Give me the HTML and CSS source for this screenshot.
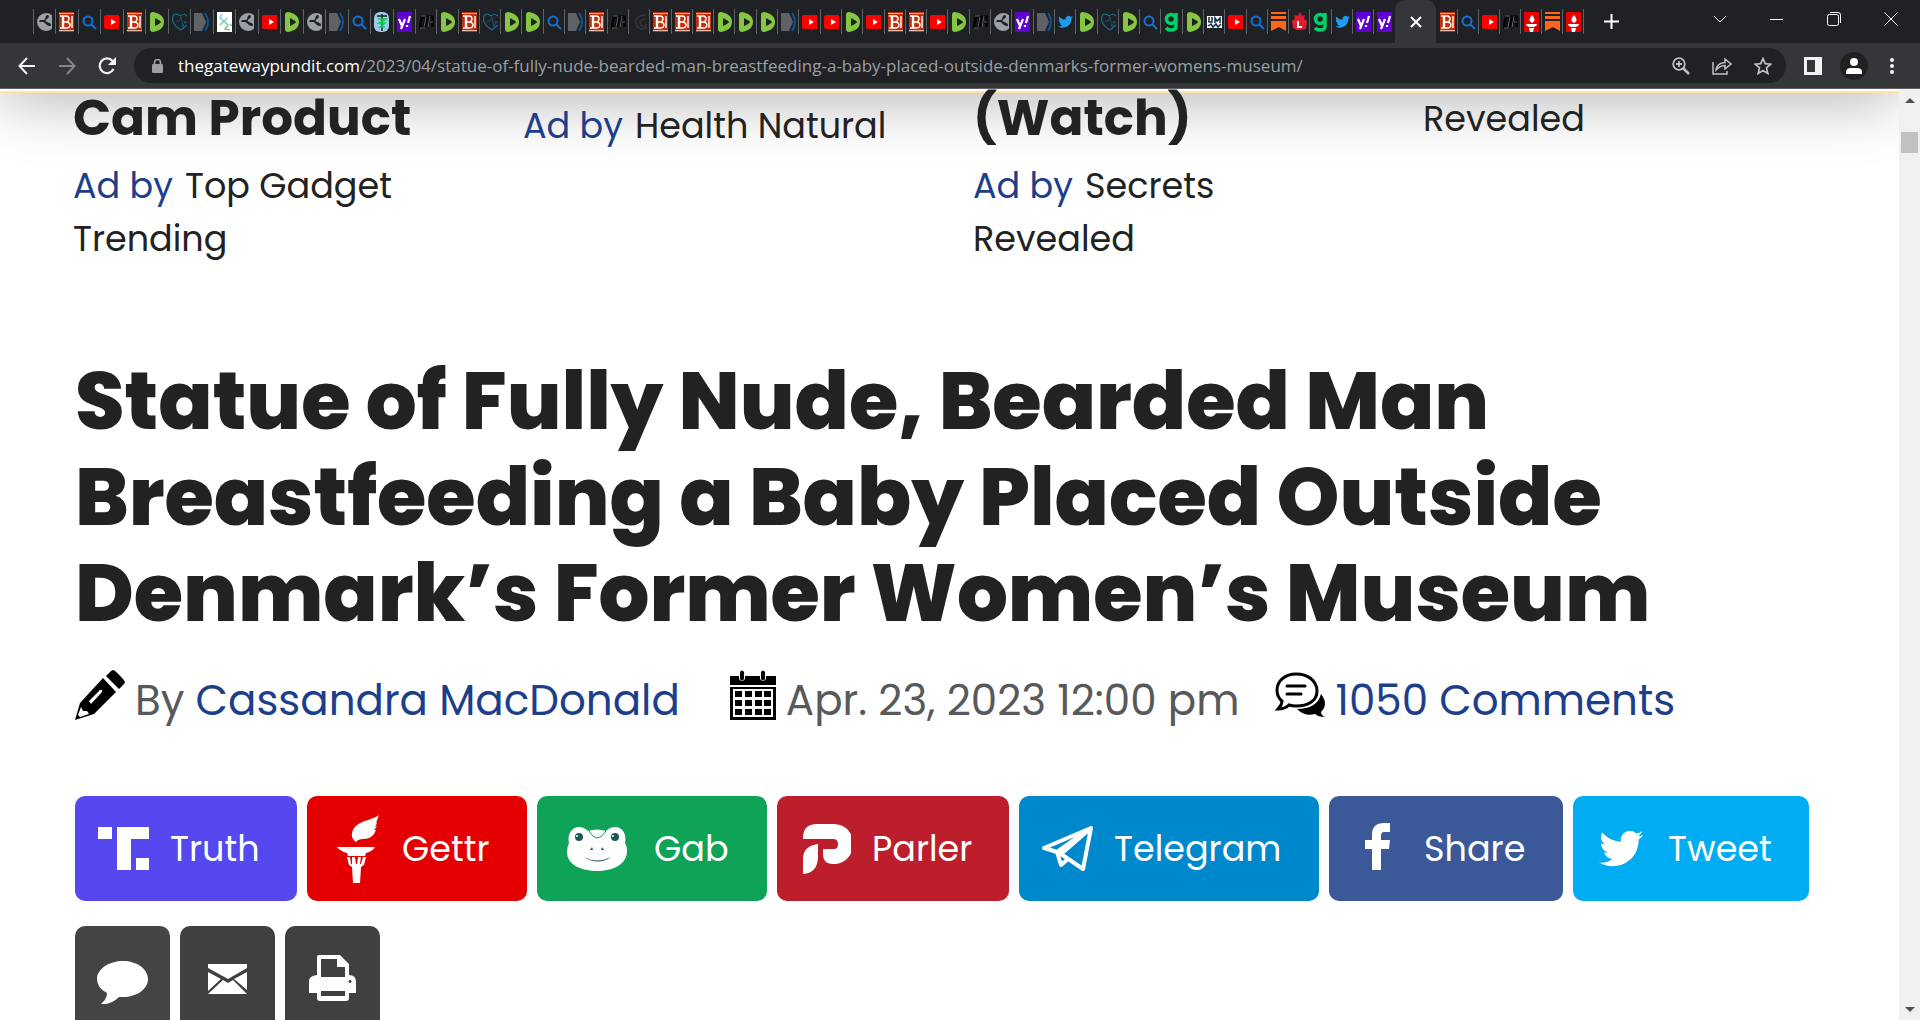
FILE: index.html
```html
<!DOCTYPE html>
<html lang="en">
<head>
<meta charset="utf-8">
<meta name="viewport" content="width=device-width, initial-scale=1">
<title>Statue of Fully Nude, Bearded Man Breastfeeding a Baby Placed Outside Denmark’s Former Women’s Museum</title>
<link rel="stylesheet" href="styles.css">
</head>
<body>
<svg class="sprite" aria-hidden="true">
  <symbol id="globe" viewBox="0 0 15 20"><circle cx="9" cy="10" r="9" fill="#9aa0a6"/><path d="M10 3c3 0 2 3 0 4s-2 2 0 3 4 1 4 3-2 1-4 0-2-3-4-3H2l1-2h4c2-1 1-4 3-5z" fill="#202124"/></symbol>
  <symbol id="bb" viewBox="0 0 15 20"><path fill="#c42e07" d="M0 0h15v20H0z"/><path d="M0 1.500h15M0 18.500h15" stroke="#e9b5a5"/><path d="M1 4h6q3 0 3 3t-4 3q5 0 5 3t-4 3H1M4 10h2M13 4v12" fill="none" stroke="#fff" stroke-width="1.400"/><path d="M4 4v12" stroke="#fff" stroke-width="2.400"/></symbol>
  <symbol id="search" viewBox="0 0 15 20"><g fill="none" stroke="#1270cf" stroke-width="2"><circle cx="6" cy="9" r="4.500"/><path d="m9 12 5 5"/></g></symbol>
  <symbol id="yt" viewBox="0 0 15 20"><rect y="3" width="18" height="14" rx="2" fill="#f00"/><path d="m7 7 5 3-5 3z" fill="#fff"/></symbol>
  <symbol id="rumble" viewBox="0 0 15 20"><path d="M1 3Q1 0 4 0c6 1 11 4 11 10S10 19 4 20q-3 0-3-3z" fill="#85c742"/><path d="M6 6q6 3 6 4t-6 4z" fill="#202124"/></symbol>
  <symbol id="heart" viewBox="0 0 15 20"><path d="M15 4Q12 1 8 4 3 0 1 4c-2 6 3 11 8 14l6-5" fill="none" stroke="#15728a" stroke-width="1.200"/><path d="M4 9h3l2-4 2 10 2-6 1 2h2" fill="none" stroke="#125468"/></symbol>
  <symbol id="tag" viewBox="0 0 15 20"><path d="M0 1h8l4 9-4 9H0z" fill="#5f6368"/><path d="M11 1q6 9 0 18" fill="none" stroke="#0b55a0" stroke-width="2"/></symbol>
  <symbol id="graph" viewBox="0 0 15 20"><path fill="#fff" d="M0 0h15v20H0z"/><path d="m5 2-2 4 4 3 4-3" fill="none" stroke="#7fd0dd" stroke-width="1.500"/><path d="m3 13 4-4 4 4-3 4 5 1m0-6 2 2" fill="none" stroke="#7cc79a" stroke-width="1.500"/></symbol>
  <symbol id="medic" viewBox="0 0 15 20"><rect width="15" height="20" rx="6" fill="#9ccbe8"/><path d="M8 2v17M3 4h10" stroke="#222" stroke-width="1.500"/><path d="M4 7h8L5 11h6l-5 4h5" fill="none" stroke="#08d04b" stroke-width="1.500"/></symbol>
  <symbol id="yahoo" viewBox="0 0 15 20"><path fill="#6001d2" d="M0 0h15v20H0z"/><path d="m2 7 3 7m3-7-4 10M13 4l-2 7m-1 2v2" stroke="#fff" stroke-width="2.200" fill="none"/></symbol>
  <symbol id="or" viewBox="0 0 15 20"><path d="M3 5h4L5 15H1zm5 10 2-10h5l-1 5h-4m3 0 1 5" fill="none" stroke="#050505" stroke-width="3"/><path d="M2 4h5M1 16h5M7 5 5 15M11 4 9 15m2-5h3" stroke="#666" fill="none"/></symbol>
  <symbol id="spiral" viewBox="0 0 15 20"><path d="M14 3C5 3 3 8 4 12s6 7 11 3M14 7c-5 0-7 3-5 6s5 1 5-1" fill="none" stroke="#34363a" stroke-width="1.500"/></symbol>
  <symbol id="bird" viewBox="0 0 24 20"><path d="M24 2.400c-.9.400-1.800.7-2.800.8 1-.6 1.800-1.600 2.200-2.700-1 .6-2 1-3.100 1.200A4.900 4.900 0 0 0 12 6.100C7.900 5.900 4.300 4 1.900 1 .6 3.100 1.200 6.100 3.400 7.500c-.8 0-1.600-.2-2.200-.6 0 2.300 1.600 4.400 3.900 4.900-.7.200-1.500.2-2.200.1.600 1.900 2.400 3.300 4.600 3.400A9.900 9.900 0 0 1 .2 17.300C9 22.500 21.700 17.100 21.500 4.900c1-.7 1.800-1.500 2.500-2.500z"/></symbol>
  <symbol id="gg" viewBox="0 0 15 20"><path d="M12 1v13q0 4-5 4-3 0-5-2" fill="none" stroke="#00d26a" stroke-width="3.500"/><circle cx="7" cy="7" r="4.500" fill="none" stroke="#00d26a" stroke-width="3.500"/></symbol>
  <symbol id="jm" viewBox="0 0 15 20"><path fill="#fff" d="M0 4h15v12H0z"/><path d="M2 5v5h3V5m3 6V6l2 3 3-3v5M1 14l3-2 2 3 3-3 2 3 3-3" fill="none" stroke="#0d2b4a" stroke-width="1.500"/></symbol>
  <symbol id="stack" viewBox="0 0 15 20"><path d="M0 0h15v2H0zM0 4h15v3H0zM0 9h15v10l-7-4-8 4z" fill="#ff6719"/></symbol>
  <symbol id="leaf" viewBox="0 0 15 20"><path d="m8 0 2 4 3-1-1 4 3 2-1 8-5 1H5l-4-2-1-7 3-2-1-4 4 1z" fill="#e21b2d"/><path d="M6 9v6h4" fill="none" stroke="#fff" stroke-width="2"/></symbol>
  <symbol id="torch" viewBox="0 0 15 20"><path fill="#e80000" d="M0 0h15v20H0z"/><path d="M8 3q5 5 0 8-5-3 0-8zM2 12h11q0 2-3 3H5q-3-1-3-3zM5 16h5l-1 4H6z" fill="#fff"/></symbol>
</svg>

<header class="browser">
  <div class="tabstrip">
    <div class="tabs tabs-a">
      <button class="tab" aria-label="Tab"><svg><use href="#globe"/></svg></button>
      <button class="tab" aria-label="Tab"><svg><use href="#bb"/></svg></button>
      <button class="tab" aria-label="Tab"><svg><use href="#search"/></svg></button>
      <button class="tab" aria-label="Tab"><svg><use href="#yt"/></svg></button>
      <button class="tab" aria-label="Tab"><svg><use href="#bb"/></svg></button>
      <button class="tab" aria-label="Tab"><svg><use href="#rumble"/></svg></button>
      <button class="tab" aria-label="Tab"><svg><use href="#heart"/></svg></button>
      <button class="tab" aria-label="Tab"><svg><use href="#tag"/></svg></button>
      <button class="tab" aria-label="Tab"><svg><use href="#graph"/></svg></button>
      <button class="tab" aria-label="Tab"><svg><use href="#globe"/></svg></button>
      <button class="tab" aria-label="Tab"><svg><use href="#yt"/></svg></button>
      <button class="tab" aria-label="Tab"><svg><use href="#rumble"/></svg></button>
      <button class="tab" aria-label="Tab"><svg><use href="#globe"/></svg></button>
      <button class="tab" aria-label="Tab"><svg><use href="#tag"/></svg></button>
      <button class="tab" aria-label="Tab"><svg><use href="#search"/></svg></button>
      <button class="tab" aria-label="Tab"><svg><use href="#medic"/></svg></button>
      <button class="tab" aria-label="Tab"><svg><use href="#yahoo"/></svg></button>
    </div>
    <div class="tabs tabs-b">
      <button class="tab" aria-label="Tab"><svg><use href="#or"/></svg></button>
      <button class="tab" aria-label="Tab"><svg><use href="#rumble"/></svg></button>
      <button class="tab" aria-label="Tab"><svg><use href="#bb"/></svg></button>
      <button class="tab" aria-label="Tab"><svg><use href="#heart"/></svg></button>
      <button class="tab" aria-label="Tab"><svg><use href="#rumble"/></svg></button>
      <button class="tab" aria-label="Tab"><svg><use href="#rumble"/></svg></button>
      <button class="tab" aria-label="Tab"><svg><use href="#search"/></svg></button>
      <button class="tab" aria-label="Tab"><svg><use href="#tag"/></svg></button>
      <button class="tab" aria-label="Tab"><svg><use href="#bb"/></svg></button>
      <button class="tab" aria-label="Tab"><svg><use href="#or"/></svg></button>
      <button class="tab" aria-label="Tab"><svg><use href="#spiral"/></svg></button>
      <button class="tab" aria-label="Tab"><svg><use href="#bb"/></svg></button>
      <button class="tab" aria-label="Tab"><svg><use href="#bb"/></svg></button>
      <button class="tab" aria-label="Tab"><svg><use href="#bb"/></svg></button>
      <button class="tab" aria-label="Tab"><svg><use href="#rumble"/></svg></button>
      <button class="tab" aria-label="Tab"><svg><use href="#rumble"/></svg></button>
      <button class="tab" aria-label="Tab"><svg><use href="#rumble"/></svg></button>
      <button class="tab" aria-label="Tab"><svg><use href="#tag"/></svg></button>
      <button class="tab" aria-label="Tab"><svg><use href="#yt"/></svg></button>
      <button class="tab" aria-label="Tab"><svg><use href="#yt"/></svg></button>
      <button class="tab" aria-label="Tab"><svg><use href="#rumble"/></svg></button>
      <button class="tab" aria-label="Tab"><svg><use href="#yt"/></svg></button>
      <button class="tab" aria-label="Tab"><svg><use href="#bb"/></svg></button>
      <button class="tab" aria-label="Tab"><svg><use href="#bb"/></svg></button>
      <button class="tab" aria-label="Tab"><svg><use href="#yt"/></svg></button>
      <button class="tab" aria-label="Tab"><svg><use href="#rumble"/></svg></button>
      <button class="tab" aria-label="Tab"><svg><use href="#or"/></svg></button>
      <button class="tab" aria-label="Tab"><svg><use href="#globe"/></svg></button>
      <button class="tab" aria-label="Tab"><svg><use href="#yahoo"/></svg></button>
      <button class="tab" aria-label="Tab"><svg><use href="#tag"/></svg></button>
      <button class="tab bird" aria-label="Tab"><svg><use href="#bird"/></svg></button>
      <button class="tab" aria-label="Tab"><svg><use href="#rumble"/></svg></button>
      <button class="tab" aria-label="Tab"><svg><use href="#heart"/></svg></button>
      <button class="tab" aria-label="Tab"><svg><use href="#rumble"/></svg></button>
      <button class="tab" aria-label="Tab"><svg><use href="#search"/></svg></button>
      <button class="tab" aria-label="Tab"><svg><use href="#gg"/></svg></button>
      <button class="tab" aria-label="Tab"><svg><use href="#rumble"/></svg></button>
      <button class="tab" aria-label="Tab"><svg><use href="#jm"/></svg></button>
      <button class="tab" aria-label="Tab"><svg><use href="#yt"/></svg></button>
      <button class="tab" aria-label="Tab"><svg><use href="#search"/></svg></button>
      <button class="tab" aria-label="Tab"><svg><use href="#stack"/></svg></button>
      <button class="tab" aria-label="Tab"><svg><use href="#leaf"/></svg></button>
      <button class="tab" aria-label="Tab"><svg><use href="#gg"/></svg></button>
      <button class="tab bird" aria-label="Tab"><svg><use href="#bird"/></svg></button>
      <button class="tab" aria-label="Tab"><svg><use href="#yahoo"/></svg></button>
      <button class="tab" aria-label="Tab"><svg><use href="#yahoo"/></svg></button>
    </div>
    <button class="tab-active" aria-label="Close tab"><svg width="12" height="12" viewBox="0 0 12 12"><path d="m1 1 10 10M11 1 1 11" stroke="#fff" stroke-width="2"/></svg></button>
    <div class="tabs tabs-c">
      <button class="tab" aria-label="Tab"><svg><use href="#bb"/></svg></button>
      <button class="tab" aria-label="Tab"><svg><use href="#search"/></svg></button>
      <button class="tab" aria-label="Tab"><svg><use href="#yt"/></svg></button>
      <button class="tab" aria-label="Tab"><svg><use href="#or"/></svg></button>
      <button class="tab" aria-label="Tab"><svg><use href="#torch"/></svg></button>
      <button class="tab" aria-label="Tab"><svg><use href="#stack"/></svg></button>
      <button class="tab" aria-label="Tab"><svg><use href="#torch"/></svg></button>
    </div>
    <button class="new-tab" aria-label="New tab"><svg width="15" height="15" viewBox="0 0 15 15"><path d="M7.500 0v15M0 7.500h15" stroke="#fff" stroke-width="2"/></svg></button>
    <div class="window-controls">
      <button aria-label="Search tabs"><svg width="14" height="14" viewBox="0 0 14 14"><path d="m1 4 6 6 6-6"/></svg></button>
      <button aria-label="Minimize"><svg width="14" height="14" viewBox="0 0 14 14"><path d="M0 7.500h13"/></svg></button>
      <button aria-label="Restore"><svg width="14" height="14" viewBox="0 0 14 14"><rect x=".5" y="2.500" width="11" height="11" rx="2"/><path d="M3 .5h8q2.500 0 2.500 2.500v8"/></svg></button>
      <button aria-label="Close"><svg width="14" height="14" viewBox="0 0 14 14"><path d="m.5.5 13 13m0-13-13 13"/></svg></button>
    </div>
  </div>
  <div class="toolbar">
    <button aria-label="Back"><svg width="18" height="18" viewBox="0 0 18 18"><path d="M17 9H2m7-8L1.500 9 9 17" fill="none" stroke="#f1f3f4" stroke-width="2"/></svg></button>
    <button aria-label="Forward"><svg width="18" height="18" viewBox="0 0 18 18"><path d="M1 9h15M9 1l7.500 8L9 17" fill="none" stroke="#84868a" stroke-width="2"/></svg></button>
    <button aria-label="Reload"><svg width="18" height="18" viewBox="0 0 18 18"><path d="M15.500 12A7.300 7.300 0 1 1 14.500 4" fill="none" stroke="#f1f3f4" stroke-width="2.200"/><path d="M18 0v8h-8z" fill="#f1f3f4"/></svg></button>
    <div class="omnibox">
      <svg width="11" height="14" viewBox="0 0 11 14"><rect y="5" width="11" height="9" rx="1" fill="#9aa0a6"/><path d="M2.500 6V3.500a3 3 0 0 1 6 0V6" fill="none" stroke="#9aa0a6" stroke-width="1.600"/></svg>
      <div class="url" role="textbox" aria-label="Address" contenteditable="true" spellcheck="false">thegatewaypundit.com<span class="path">/2023/04/statue-of-fully-nude-bearded-man-breastfeeding-a-baby-placed-outside-denmarks-former-womens-museum/</span></div>
      <button aria-label="Zoom"><svg width="18" height="18" viewBox="0 0 18 18"><g fill="none" stroke="#bdc1c6" stroke-width="1.800"><circle cx="7" cy="7" r="5.800"/><path d="M7 4v6M4 7h6"/><path d="m11 11 6 6" stroke-width="2.500"/></g></svg></button>
      <button aria-label="Share"><svg width="20" height="18" viewBox="0 0 20 18"><path d="M1 5v12h14v-3M4 13q1-7 9-7.500V2l6 5-6 5V8.500q-5 0-9 4.500z" fill="none" stroke="#bdc1c6" stroke-width="1.500"/></svg></button>
      <button aria-label="Bookmark"><svg width="18" height="18" viewBox="0 0 18 18"><path d="m9 1.500 2.200 5.200 5.600.5-4.300 3.700 1.300 5.500L9 13.500l-4.800 2.900 1.300-5.500-4.300-3.700 5.600-.5z" fill="none" stroke="#bdc1c6" stroke-width="1.700"/></svg></button>
    </div>
    <div class="tools">
      <button aria-label="Side panel"><svg width="18" height="18" viewBox="0 0 18 18"><path fill="#f1f3f4" d="M0 0h18v18H0z"/><path fill="#35363a" d="M3 3h8v12H3z"/></svg></button>
      <button aria-label="Profile"><svg width="28" height="28" viewBox="0 0 28 28"><circle cx="14" cy="14" r="14" fill="#202124"/><circle cx="14" cy="10" r="4" fill="#fff"/><path d="M6 22v-2q0-4 5-4h6q5 0 5 4v2z" fill="#fff"/></svg></button>
    </div>
    <button aria-label="Menu"><svg width="4" height="18" viewBox="0 0 4 18"><g fill="#f1f3f4"><circle cx="2" cy="3" r="2"/><circle cx="2" cy="9" r="2"/><circle cx="2" cy="15" r="2"/></g></svg></button>
  </div>
</header>

<div class="viewport">
  <main class="page">
    <section class="ads">
      <article class="ad">
        <h2>Cam Product</h2>
        <p><a href="#">Ad by</a>Top Gadget Trending</p>
      </article>
      <article class="ad ad-low">
        <p><a href="#">Ad by</a>Health Natural</p>
      </article>
      <article class="ad">
        <h2>(Watch)</h2>
        <p><a href="#">Ad by</a>Secrets Revealed</p>
      </article>
      <article class="ad ad-high">
        <p>Revealed</p>
      </article>
    </section>

    <h1>Statue of Fully Nude, Bearded Man Breastfeeding a Baby Placed Outside Denmark’s Former Women’s Museum</h1>

    <div class="meta">
      <div class="meta-item author">
        <svg width="50" height="50" viewBox="0 0 50 50"><path d="m28 8 13 14-22 22L0 50l5-17z"/><path d="m36 1 2-1q2 0 10 9 3 3 1 5l-5 5L31 6z"/><path d="m6 37 2 4h4l2 3-9 3-2-2zM14 31l11-11q3-1 2 2L16 34z" fill="#fff"/></svg>
        <span>By <a href="#">Cassandra MacDonald</a></span>
      </div>
      <div class="meta-item date">
        <svg width="46" height="50" viewBox="0 0 46 50"><path d="M0 6h9v3q3 4 6 0V6h15v3q3 4 6 0V6h10v9H0zM0 17h46v33H0z"/><path d="M10 2q2-3 4 0v7q-2 3-4 0zM31 2q2-3 4 0v7q-2 3-4 0z"/><path d="M3 19h40v28H3z" fill="#fff"/><path d="M5 21h7v6H5zm10 0h7v6h-7zm10 0h7v6h-7zm9 0h7v6h-7zM5 30h7v6H5zm10 0h7v6h-7zm10 0h7v6h-7zm9 0h7v6h-7zM5 39h7v6H5zm10 0h7v6h-7zm10 0h7v6h-7zm9 0h7v6h-7z"/></svg>
        <time datetime="2023-04-23T12:00">Apr. 23, 2023 12:00 pm</time>
      </div>
      <div class="meta-item comments">
        <svg width="50" height="50" viewBox="0 0 50 50"><path d="M21 4c12 0 21 7 21 17S33 36 21 36q-4 0-7-1-4 4-11 4 4-4 4-8Q2 27 2 20C2 11 10 4 21 4z" fill="none" stroke="#000" stroke-width="3"/><path d="M12 16h18M12 24h14" stroke="#000" stroke-width="3" stroke-linecap="round"/><path d="M46 24q8 10 0 18 0 3 4 5-7 0-10-3-10 3-18-5Q42 39 46 24z"/></svg>
        <a href="#">1050 Comments</a>
      </div>
    </div>

    <div class="share">
      <button class="btn truth"><svg viewBox="0 0 52 60"><path d="M1 8h14v12H1zM20 8h32v12H34v31H20zM39 39h13v12H39z"/></svg>Truth</button>
      <button class="btn gettr"><svg viewBox="0 0 52 68"><path d="M50 0q-4 3-14 6c-9 3-14 8-13 16q1 3 4 5 2-3 7-3 10 0 13-9h-2q2-2 3-4l-2 1q2-3 2-5l-1 1zM8 32h38q-2 4-9 6l-1 3H19l-1-3q-7-2-10-6zM18 42h3l1 7h1v-7h3l1 7h1l1-7h3l-1 7h1l2-7h3l-2 8-3 2-1 16h-7l-1-16-3-2z"/></svg>Gettr</button>
      <button class="btn gab"><svg viewBox="0 0 60 60"><path d="M2 24C0 15 5 8 12 8q5 0 9 4 9-3 18 0 4-4 9-4c8 0 12 8 10 16q2 3 2 8c0 14-15 20-30 20S0 46 0 33q0-5 2-9z"/><g fill="#1d5a56"><circle cx="12" cy="18" r="4"/><circle cx="48" cy="18" r="4"/><path d="m23 31 2-3 1 3zm11 0 1-3 2 3zM17 38q13 7 27 0-13 9-27 0z"/></g><circle cx="10" cy="17" r="1"/><circle cx="46" cy="17" r="1"/><path d="M22 12q8 14 17 0" fill="none" stroke="#0fa357"/></svg>Gab</button>
      <button class="btn parler"><svg viewBox="0 0 52 60"><path d="M4 19Q4 5 18 5h16c12 0 20 8 20 20S45 45 34 45c-7 0-10-4-10-10v-5h11q4 0 4-5t-5-5H4zM4 55V40q0-13 15-15v12q0 17-15 18z"/></svg>Parler</button>
      <button class="btn telegram"><svg viewBox="0 0 52 60"><path d="M3 29 50 9l-8 41-22-15L50 9 16 33zm13 4 4 13 7-6" fill="none" stroke="#fff" stroke-width="4" stroke-linejoin="round"/></svg>Telegram</button>
      <button class="btn share-fb"><svg viewBox="0 0 52 60"><path d="M39 4v9h-6q-3 0-3 4v4h9l-1 9h-8v21h-9V30h-7v-9h7v-5q0-12 12-12z"/></svg>Share</button>
      <button class="btn tweet"><svg viewBox="-2 0 28 20"><use href="#bird" width="24" height="20"/></svg>Tweet</button>
      <button class="btn icon-only" aria-label="Comment"><svg viewBox="0 0 52 60"><path d="M26 12c14 0 25 8 25 18S40 48 26 48h-4q-8 8-18 7 6-5 6-11Q0 39 0 30c0-10 12-18 26-18z"/></svg></button>
      <button class="btn icon-only dark" aria-label="Email"><svg viewBox="0 0 52 60"><path d="M6 15h39v4L26 30 6 19zM6 23l13 7L6 42zM45 23l-13 7 13 11zM6 45l15-14 5 3 5-3 14 14z"/></svg></button>
      <button class="btn icon-only dark" aria-label="Print"><svg viewBox="1 0 52 60"><path d="M11 8q0-2 2-2h21l9 9v11q7 0 7 7v11h-7v5q0 3-3 3H14q-3 0-3-3v-5H3V32q0-5 8-6zm4 2v18h24V18h-8v-8zm0 32v5h24v-5zm29-11a1.500 1.500 0 1 0 .1 0z" fill-rule="evenodd"/></svg></button>
    </div>
  </main>
  <div class="scrollbar" aria-hidden="true">
    <span class="arrow up"></span>
    <span class="thumb"></span>
    <span class="arrow down"></span>
  </div>
</div>
</body>
</html>
```
FILE: styles.css
```css
* { box-sizing: border-box; }

html, body { height: 100%; }

body {
  margin: 0;
  display: flex;
  flex-direction: column;
  overflow: hidden;
  font-family: Poppins, Inter, "Liberation Sans", sans-serif;
  color: #222;
  background: #fff;
}

button {
  border: 0;
  padding: 0;
  margin: 0;
  background: none;
  font: inherit;
  color: inherit;
}

a { color: #1d3f8b; text-decoration: none; }
h1, h2, p { margin: 0; }
svg { flex: none; display: block; }
.sprite { position: absolute; width: 0; height: 0; }

/* Browser frame */
.browser { flex: none; background: #35363a; border-bottom: 1px solid #5f6368; }

.tabstrip {
  display: flex;
  align-items: stretch;
  height: 43px;
  padding-left: 33px;
  background: #202124;
}

.tabs { display: flex; min-width: 0; }
.tabs-a { flex: 382 1 0; }
.tabs-b { flex: 980 1 0; }
.tabs-c { flex: 148 1 0; }

.tab {
  flex: 1 1 0;
  min-width: 0;
  height: 25px;
  margin-top: 9px;
  padding-left: 3px;
  overflow: hidden;
  border-left: 1px solid #5f6368;
}
.tab svg { width: 15px; height: 20px; }
.tabs-c .tab:first-child { border-left-color: transparent; }
.tabs-c .tab:last-child { border-right: 1px solid #5f6368; }
.bird { fill: #1d9bf0; }

.tab-active {
  flex: none;
  width: 41px;
  display: grid;
  place-items: center;
  background: #35363a;
  border-radius: 10px 10px 0 0;
}

.new-tab { flex: none; width: 54px; display: grid; place-items: center; }

.window-controls { flex: none; display: flex; margin: 0 1px 0 53px; }
.window-controls button { width: 57px; height: 37px; display: grid; place-items: center; }
.window-controls svg { fill: none; stroke: #fff; }

.toolbar {
  display: flex;
  align-items: center;
  gap: 22px;
  height: 45px;
  padding: 0 26px 0 18px;
}

.omnibox {
  flex: 1;
  min-width: 0;
  display: flex;
  align-items: center;
  height: 35px;
  margin: 0 -4px;
  padding: 0 14px 0 18px;
  gap: 22px;
  border-radius: 18px;
  background: #202124;
}

.url {
  flex: 1;
  min-width: 0;
  margin-left: -7px;
  overflow: hidden;
  white-space: nowrap;
  font: 17px/24px "Segoe UI", "Open Sans", sans-serif;
  color: #fff;
}
.path { color: #9aa0a6; }

.tools { display: flex; align-items: center; gap: 18px; }

/* Page */
.viewport { flex: 1; min-height: 0; display: flex; }

.page {
  flex: 1;
  min-width: 0;
  position: relative;
  overflow: hidden;
  padding: 0 75px;
}

/* Lower edge of the site header, which drops a shadow over the article */
.page::before {
  content: "";
  position: absolute;
  z-index: -1;
  left: 0;
  right: 0;
  top: -100px;
  height: 102px;
  border-bottom: 2px solid #ffe2a4;
  box-shadow: 0 10px 60px rgba(0, 0, 0, .28);
}

.ads {
  display: grid;
  grid-template-columns: repeat(4, 1fr);
  column-gap: 75px;
  margin: 0 26px 0 -2px;
}
.ad-low { padding-top: 10px; }
.ad-high { padding-top: 3px; }

.ad h2 { font-size: 50px; line-height: 58px; font-weight: 700; margin-bottom: 12px; }
.ad p { font-size: 35px; line-height: 53px; }
.ad a { margin-right: 12px; }

h1 { margin-top: 88px; font-size: 80px; line-height: 96px; font-weight: 800; }

.meta {
  display: flex;
  margin-top: 29px;
  font-size: 42px;
  line-height: 62px;
  color: #58595b;
  white-space: nowrap;
}
.meta-item { display: flex; gap: 10px; }
.author { margin-right: 50px; }
.date { margin-right: 36px; }

.share { display: flex; flex-wrap: wrap; gap: 25px 10px; margin-top: 64px; }

.btn {
  display: flex;
  align-items: center;
  gap: 21px;
  height: 105px;
  padding-left: 22px;
  border-radius: 10px;
  color: #fff;
  font-size: 35px;
}
.btn svg { width: 52px; height: 60px; fill: #fff; }

.truth { width: 222px; background: #5448ee; }
.gettr { width: 220px; background: #e40000; }
.gettr svg { height: 68px; }
.gab { width: 230px; padding-left: 30px; gap: 27px; background: #0fa357; }
.gab svg { width: 60px; }
.parler { width: 232px; background: #bd1e2c; }
.telegram { width: 300px; background: #0088cc; }
.share-fb { width: 234px; background: #3b5998; }
.tweet { width: 236px; background: #00acf2; }
.icon-only { width: 95px; background: #444; }
.dark { background: #404040; }

.scrollbar {
  flex: none;
  width: 21px;
  display: flex;
  flex-direction: column;
  align-items: center;
  padding: 9px 0 8px;
  background: #f0f0f0;
}
.arrow { border: 5px solid transparent; }
.up { border-top: 0; border-bottom-color: #505050; }
.down { border-bottom: 0; border-top-color: #505050; margin-top: auto; }
.thumb { width: 17px; height: 21px; margin-top: 29px; background: #c1c1c1; }
```
